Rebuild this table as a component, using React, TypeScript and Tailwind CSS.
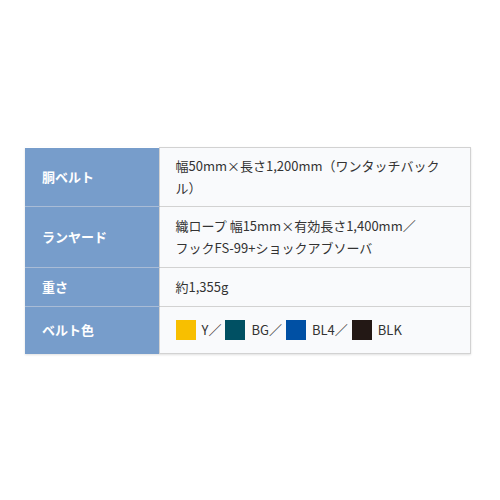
const swatches = [
  { label: "Y", color: "bg-[#f8bf00]" },
  { label: "BG", color: "bg-[#005063]" },
  { label: "BL4", color: "bg-[#0050a4]" },
  { label: "BLK", color: "bg-[#231815]" },
]

export default function App() {
  return (
    <div className="w-[500px] h-[500px] bg-white pt-[147px] pl-[25px] font-['Noto_Sans_CJK_JP',sans-serif]">
      <table className="w-[446px] border-collapse text-[13px] leading-[22px] shadow-[0_1px_2px_rgba(0,0,0,0.12)]">
        <tbody>
          <tr className="h-[59px]">
            <th className="w-[134px] bg-[#779dcb] text-white font-bold text-left px-[17px] border-b border-[#a9bcd6]">胴ベルト</th>
            <td className="bg-[#f9fafc] text-[#333] px-4 py-[7px] border border-[#d2d2d2]">
              幅50mm×長さ1,200mm（ワンタッチバックル）
            </td>
          </tr>
          <tr className="h-[61px]">
            <th className="bg-[#779dcb] text-white font-bold text-left px-[17px] border-b border-[#a9bcd6]">ランヤード</th>
            <td className="bg-[#f9fafc] text-[#333] px-4 py-[7px] border border-[#d2d2d2]">
              織ロープ 幅15mm×有効長さ1,400mm／<br />フックFS-99+ショックアブソーバ
            </td>
          </tr>
          <tr className="h-[39px]">
            <th className="bg-[#779dcb] text-white font-bold text-left px-[17px] border-b border-[#a9bcd6]">重さ</th>
            <td className="bg-[#f9fafc] text-[#333] px-4 border border-[#d2d2d2]">約1,355g</td>
          </tr>
          <tr className="h-[47px]">
            <th className="bg-[#779dcb] text-white font-bold text-left px-[17px]">ベルト色</th>
            <td className="bg-[#f9fafc] text-[#333] px-4 border border-[#d2d2d2]">
              <div className="flex items-center">
                {swatches.map((s, i) => (
                  <span key={s.label} className="flex items-center">
                    <span className={`inline-block w-[20px] h-[20px] mr-[6px] ${s.color}`} />
                    <span className="mr-[4px]">{s.label}{i < swatches.length - 1 ? "／" : ""}</span>
                  </span>
                ))}
              </div>
            </td>
          </tr>
        </tbody>
      </table>
    </div>
  )
}
